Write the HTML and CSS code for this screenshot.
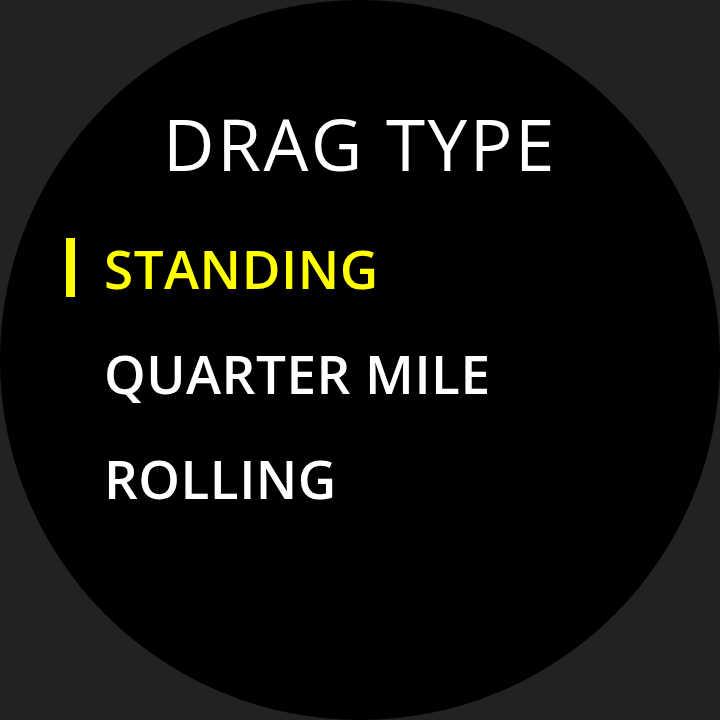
FILE: index.html
```html
<!DOCTYPE html>
<html>
<head>
<meta charset="utf-8">
<link rel="stylesheet" href="styles.css">
</head>
<body>
<div class="watch">
  <h1 class="title">DRAG TYPE</h1>
  <ul class="menu">
    <li class="item selected">STANDING</li>
    <li class="item">QUARTER MILE</li>
    <li class="item">ROLLING</li>
  </ul>
</div>
</body>
</html>
```
FILE: styles.css
```css
html, body {
  margin: 0;
  padding: 0;
  background: #222222;
}
.watch {
  width: 720px;
  height: 720px;
  border-radius: 50%;
  background: #000;
  box-sizing: border-box;
  padding-top: 102px;
  font-family: "Open Sans", "Noto Sans", sans-serif;
  color: #fff;
}
.title {
  margin: 0;
  text-align: center;
  font-weight: 400;
  font-size: 71px;
  line-height: 84px;
  letter-spacing: 2.5px;
}
.menu {
  list-style: none;
  margin: 0;
  padding: 0 0 0 104px;
  margin-top: 53px;
  display: flex;
  flex-direction: column;
  gap: 45px;
}
.item {
  position: relative;
  font-size: 53px;
  font-weight: 600;
  line-height: 60px;
  letter-spacing: 0.5px;
}
.selected {
  color: #ffff00;
}
.selected::before {
  content: "";
  position: absolute;
  left: -38px;
  top: -1px;
  width: 9px;
  height: 59px;
  background: #ffff00;
}
```
